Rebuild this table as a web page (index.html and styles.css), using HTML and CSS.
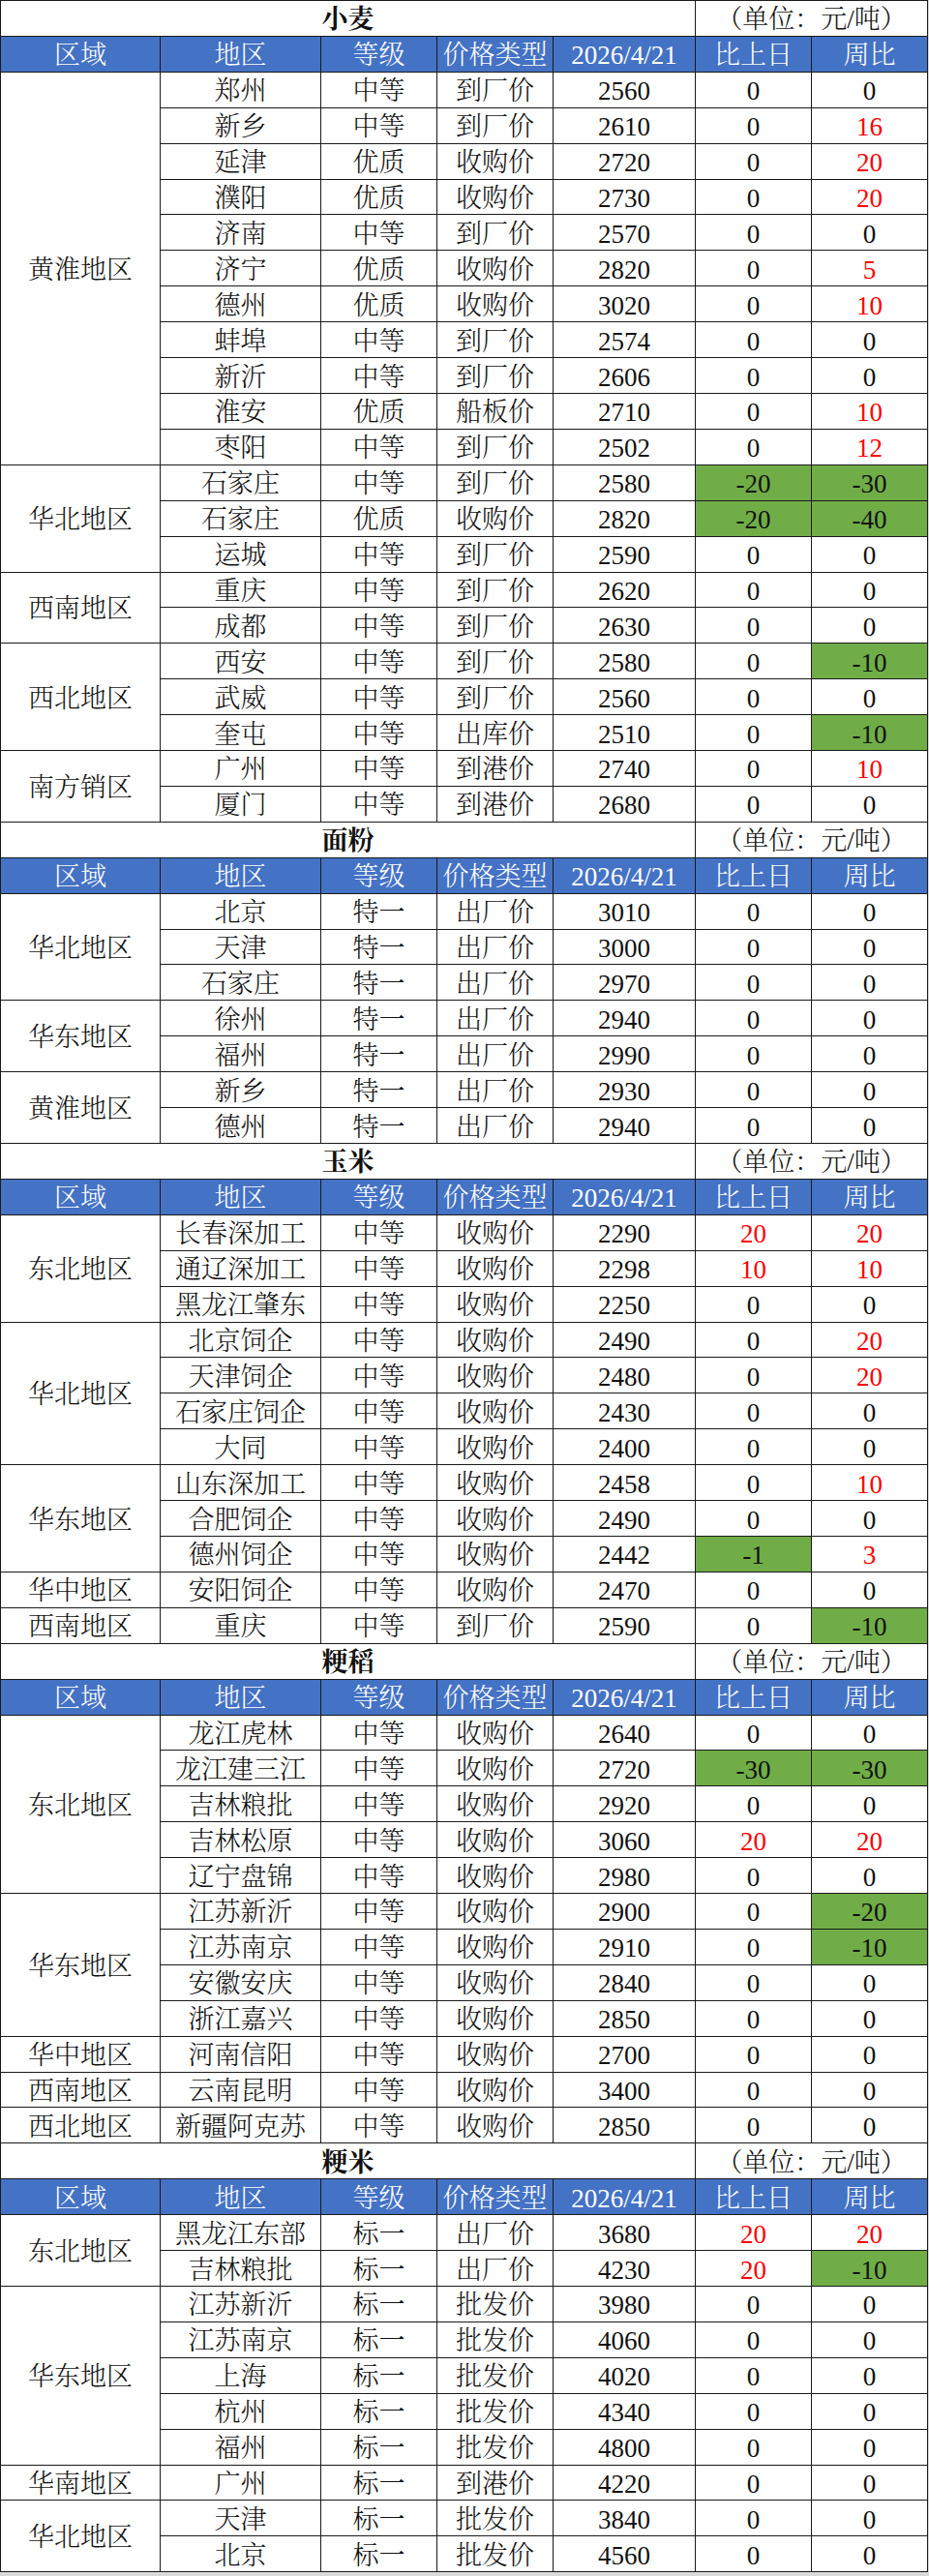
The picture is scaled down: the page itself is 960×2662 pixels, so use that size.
FILE: index.html
```html
<!DOCTYPE html>
<html lang="zh-CN">
<head>
<meta charset="utf-8">
<title>粮食价格</title>
<link rel="stylesheet" href="styles.css">
</head>
<body>
<table class="price">
<colgroup>
<col class="c-area"><col class="c-city"><col class="c-grade"><col class="c-type"><col class="c-price"><col class="c-day"><col class="c-week">
</colgroup>

<tbody>
<tr class="title"><td colspan="5" class="t-name">小麦</td><td colspan="2">（单位：元/吨）</td></tr>
<tr class="hd"><td>区域</td><td>地区</td><td>等级</td><td>价格类型</td><td>2026/4/21</td><td>比上日</td><td>周比</td></tr>
<tr><td rowspan="11">黄淮地区</td><td>郑州</td><td>中等</td><td>到厂价</td><td>2560</td><td>0</td><td>0</td></tr>
<tr><td>新乡</td><td>中等</td><td>到厂价</td><td>2610</td><td>0</td><td class="r">16</td></tr>
<tr><td>延津</td><td>优质</td><td>收购价</td><td>2720</td><td>0</td><td class="r">20</td></tr>
<tr><td>濮阳</td><td>优质</td><td>收购价</td><td>2730</td><td>0</td><td class="r">20</td></tr>
<tr><td>济南</td><td>中等</td><td>到厂价</td><td>2570</td><td>0</td><td>0</td></tr>
<tr><td>济宁</td><td>优质</td><td>收购价</td><td>2820</td><td>0</td><td class="r">5</td></tr>
<tr><td>德州</td><td>优质</td><td>收购价</td><td>3020</td><td>0</td><td class="r">10</td></tr>
<tr><td>蚌埠</td><td>中等</td><td>到厂价</td><td>2574</td><td>0</td><td>0</td></tr>
<tr><td>新沂</td><td>中等</td><td>到厂价</td><td>2606</td><td>0</td><td>0</td></tr>
<tr><td>淮安</td><td>优质</td><td>船板价</td><td>2710</td><td>0</td><td class="r">10</td></tr>
<tr><td>枣阳</td><td>中等</td><td>到厂价</td><td>2502</td><td>0</td><td class="r">12</td></tr>
<tr><td rowspan="3">华北地区</td><td>石家庄</td><td>中等</td><td>到厂价</td><td>2580</td><td class="g">-20</td><td class="g">-30</td></tr>
<tr><td>石家庄</td><td>优质</td><td>收购价</td><td>2820</td><td class="g">-20</td><td class="g">-40</td></tr>
<tr><td>运城</td><td>中等</td><td>到厂价</td><td>2590</td><td>0</td><td>0</td></tr>
<tr><td rowspan="2">西南地区</td><td>重庆</td><td>中等</td><td>到厂价</td><td>2620</td><td>0</td><td>0</td></tr>
<tr><td>成都</td><td>中等</td><td>到厂价</td><td>2630</td><td>0</td><td>0</td></tr>
<tr><td rowspan="3">西北地区</td><td>西安</td><td>中等</td><td>到厂价</td><td>2580</td><td>0</td><td class="g">-10</td></tr>
<tr><td>武威</td><td>中等</td><td>到厂价</td><td>2560</td><td>0</td><td>0</td></tr>
<tr><td>奎屯</td><td>中等</td><td>出库价</td><td>2510</td><td>0</td><td class="g">-10</td></tr>
<tr><td rowspan="2">南方销区</td><td>广州</td><td>中等</td><td>到港价</td><td>2740</td><td>0</td><td class="r">10</td></tr>
<tr><td>厦门</td><td>中等</td><td>到港价</td><td>2680</td><td>0</td><td>0</td></tr>
</tbody>

<tbody>
<tr class="title"><td colspan="5" class="t-name">面粉</td><td colspan="2">（单位：元/吨）</td></tr>
<tr class="hd"><td>区域</td><td>地区</td><td>等级</td><td>价格类型</td><td>2026/4/21</td><td>比上日</td><td>周比</td></tr>
<tr><td rowspan="3">华北地区</td><td>北京</td><td>特一</td><td>出厂价</td><td>3010</td><td>0</td><td>0</td></tr>
<tr><td>天津</td><td>特一</td><td>出厂价</td><td>3000</td><td>0</td><td>0</td></tr>
<tr><td>石家庄</td><td>特一</td><td>出厂价</td><td>2970</td><td>0</td><td>0</td></tr>
<tr><td rowspan="2">华东地区</td><td>徐州</td><td>特一</td><td>出厂价</td><td>2940</td><td>0</td><td>0</td></tr>
<tr><td>福州</td><td>特一</td><td>出厂价</td><td>2990</td><td>0</td><td>0</td></tr>
<tr><td rowspan="2">黄淮地区</td><td>新乡</td><td>特一</td><td>出厂价</td><td>2930</td><td>0</td><td>0</td></tr>
<tr><td>德州</td><td>特一</td><td>出厂价</td><td>2940</td><td>0</td><td>0</td></tr>
</tbody>

<tbody>
<tr class="title"><td colspan="5" class="t-name">玉米</td><td colspan="2">（单位：元/吨）</td></tr>
<tr class="hd"><td>区域</td><td>地区</td><td>等级</td><td>价格类型</td><td>2026/4/21</td><td>比上日</td><td>周比</td></tr>
<tr><td rowspan="3">东北地区</td><td>长春深加工</td><td>中等</td><td>收购价</td><td>2290</td><td class="r">20</td><td class="r">20</td></tr>
<tr><td>通辽深加工</td><td>中等</td><td>收购价</td><td>2298</td><td class="r">10</td><td class="r">10</td></tr>
<tr><td>黑龙江肇东</td><td>中等</td><td>收购价</td><td>2250</td><td>0</td><td>0</td></tr>
<tr><td rowspan="4">华北地区</td><td>北京饲企</td><td>中等</td><td>收购价</td><td>2490</td><td>0</td><td class="r">20</td></tr>
<tr><td>天津饲企</td><td>中等</td><td>收购价</td><td>2480</td><td>0</td><td class="r">20</td></tr>
<tr><td>石家庄饲企</td><td>中等</td><td>收购价</td><td>2430</td><td>0</td><td>0</td></tr>
<tr><td>大同</td><td>中等</td><td>收购价</td><td>2400</td><td>0</td><td>0</td></tr>
<tr><td rowspan="3">华东地区</td><td>山东深加工</td><td>中等</td><td>收购价</td><td>2458</td><td>0</td><td class="r">10</td></tr>
<tr><td>合肥饲企</td><td>中等</td><td>收购价</td><td>2490</td><td>0</td><td>0</td></tr>
<tr><td>德州饲企</td><td>中等</td><td>收购价</td><td>2442</td><td class="g">-1</td><td class="r">3</td></tr>
<tr><td>华中地区</td><td>安阳饲企</td><td>中等</td><td>收购价</td><td>2470</td><td>0</td><td>0</td></tr>
<tr><td>西南地区</td><td>重庆</td><td>中等</td><td>到厂价</td><td>2590</td><td>0</td><td class="g">-10</td></tr>
</tbody>

<tbody>
<tr class="title"><td colspan="5" class="t-name">粳稻</td><td colspan="2">（单位：元/吨）</td></tr>
<tr class="hd"><td>区域</td><td>地区</td><td>等级</td><td>价格类型</td><td>2026/4/21</td><td>比上日</td><td>周比</td></tr>
<tr><td rowspan="5">东北地区</td><td>龙江虎林</td><td>中等</td><td>收购价</td><td>2640</td><td>0</td><td>0</td></tr>
<tr><td>龙江建三江</td><td>中等</td><td>收购价</td><td>2720</td><td class="g">-30</td><td class="g">-30</td></tr>
<tr><td>吉林粮批</td><td>中等</td><td>收购价</td><td>2920</td><td>0</td><td>0</td></tr>
<tr><td>吉林松原</td><td>中等</td><td>收购价</td><td>3060</td><td class="r">20</td><td class="r">20</td></tr>
<tr><td>辽宁盘锦</td><td>中等</td><td>收购价</td><td>2980</td><td>0</td><td>0</td></tr>
<tr><td rowspan="4">华东地区</td><td>江苏新沂</td><td>中等</td><td>收购价</td><td>2900</td><td>0</td><td class="g">-20</td></tr>
<tr><td>江苏南京</td><td>中等</td><td>收购价</td><td>2910</td><td>0</td><td class="g">-10</td></tr>
<tr><td>安徽安庆</td><td>中等</td><td>收购价</td><td>2840</td><td>0</td><td>0</td></tr>
<tr><td>浙江嘉兴</td><td>中等</td><td>收购价</td><td>2850</td><td>0</td><td>0</td></tr>
<tr><td>华中地区</td><td>河南信阳</td><td>中等</td><td>收购价</td><td>2700</td><td>0</td><td>0</td></tr>
<tr><td>西南地区</td><td>云南昆明</td><td>中等</td><td>收购价</td><td>3400</td><td>0</td><td>0</td></tr>
<tr><td>西北地区</td><td>新疆阿克苏</td><td>中等</td><td>收购价</td><td>2850</td><td>0</td><td>0</td></tr>
</tbody>

<tbody>
<tr class="title"><td colspan="5" class="t-name">粳米</td><td colspan="2">（单位：元/吨）</td></tr>
<tr class="hd"><td>区域</td><td>地区</td><td>等级</td><td>价格类型</td><td>2026/4/21</td><td>比上日</td><td>周比</td></tr>
<tr><td rowspan="2">东北地区</td><td>黑龙江东部</td><td>标一</td><td>出厂价</td><td>3680</td><td class="r">20</td><td class="r">20</td></tr>
<tr><td>吉林粮批</td><td>标一</td><td>出厂价</td><td>4230</td><td class="r">20</td><td class="g">-10</td></tr>
<tr><td rowspan="5">华东地区</td><td>江苏新沂</td><td>标一</td><td>批发价</td><td>3980</td><td>0</td><td>0</td></tr>
<tr><td>江苏南京</td><td>标一</td><td>批发价</td><td>4060</td><td>0</td><td>0</td></tr>
<tr><td>上海</td><td>标一</td><td>批发价</td><td>4020</td><td>0</td><td>0</td></tr>
<tr><td>杭州</td><td>标一</td><td>批发价</td><td>4340</td><td>0</td><td>0</td></tr>
<tr><td>福州</td><td>标一</td><td>批发价</td><td>4800</td><td>0</td><td>0</td></tr>
<tr><td>华南地区</td><td>广州</td><td>标一</td><td>到港价</td><td>4220</td><td>0</td><td>0</td></tr>
<tr><td rowspan="2">华北地区</td><td>天津</td><td>标一</td><td>批发价</td><td>3840</td><td>0</td><td>0</td></tr>
<tr><td>北京</td><td>标一</td><td>批发价</td><td>4560</td><td>0</td><td>0</td></tr>
</tbody>
</table>
</body>
</html>
```

FILE: styles.css
```css
html, body {
  margin: 0;
  padding: 0;
}

body {
  background: #d9d9d9;
  width: 960px;
}

.price {
  width: 958px;
  table-layout: fixed;
  border-collapse: collapse;
  background: #ffffff;
  font-family: "Liberation Serif", "Noto Serif CJK SC", "Noto Sans CJK SC", serif;
  font-size: 27px;
  font-weight: 300;
  color: #111111;
}

.c-area { width: 165px; }
.c-city { width: 166px; }
.c-grade { width: 120px; }
.c-type { width: 120px; }
.c-price { width: 147px; }
.c-day { width: 120px; }
.c-week { width: 120px; }

.price tr {
  height: 36.92px;
}

.price td {
  border: 1px solid #1a1a1a;
  padding: 3px 0 0 0;
  text-align: center;
  vertical-align: middle;
  white-space: nowrap;
  line-height: 30px;
  overflow: hidden;
}

.title td {
  background: #ffffff;
}

.title .t-name {
  font-weight: bold;
}

.hd td {
  background: #4472c4;
  color: #ffffff;
}

.price td.r {
  color: #ff0000;
}

.price td.g {
  background: #70ad47;
}
```
